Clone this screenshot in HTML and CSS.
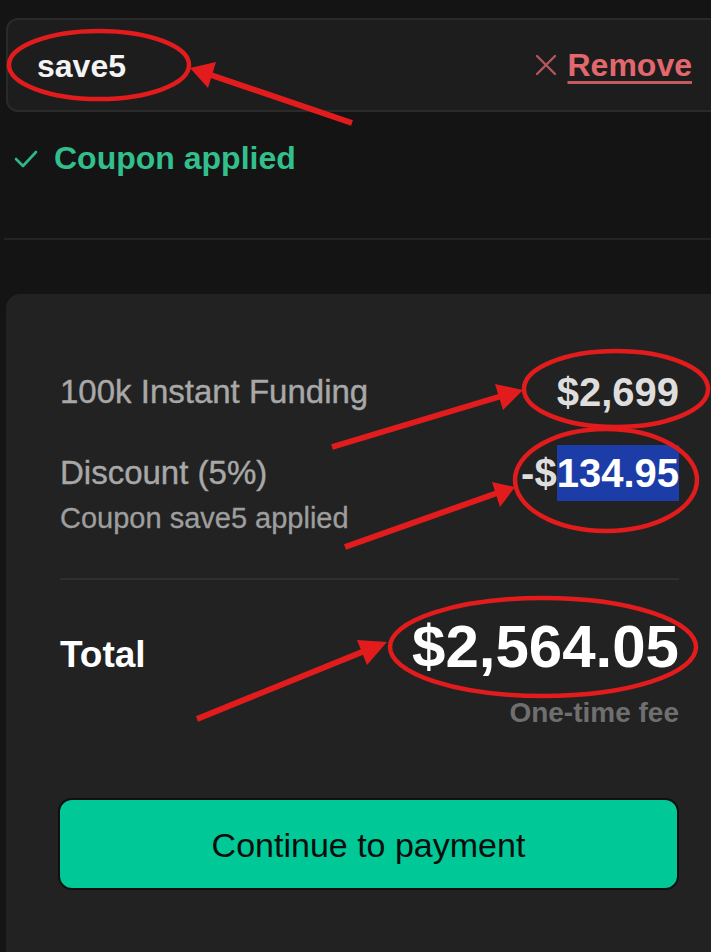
FILE: index.html
```html
<!DOCTYPE html>
<html lang="en">
<head>
<meta charset="utf-8">
<title>Checkout summary</title>
<link rel="stylesheet" href="styles.css">
</head>
<body>
<div class="page">
  <div class="coupon-box">
    <span class="code">save5</span>
    <a class="remove" href="#">
      <svg class="x-icon" width="22" height="22" viewBox="0 0 22 22"><path d="M2 2 L20 20 M20 2 L2 20" stroke="#b4575b" stroke-width="2.4" fill="none" stroke-linecap="round"/></svg>
      <span class="remove-text">Remove</span>
    </a>
  </div>
  <div class="status">
    <svg class="check" width="24" height="20" viewBox="0 0 24 20"><path d="M2 10 L9 17 L22 3" stroke="#2db886" stroke-width="2.6" fill="none" stroke-linecap="round" stroke-linejoin="round"/></svg>
    <span>Coupon applied</span>
  </div>
  <div class="divider"></div>
  <section class="card">
    <div class="row">
      <span class="label">100k Instant Funding</span>
      <span class="amount">$2,699</span>
    </div>
    <div class="row row-discount">
      <div class="label-group">
        <span class="label">Discount (5%)</span>
        <span class="sub">Coupon save5 applied</span>
      </div>
      <span class="amount">-$<span class="selected">134.95</span></span>
    </div>
    <div class="card-divider"></div>
    <div class="total-row">
      <span class="total-label">Total</span>
      <span class="total-amount">$2,564.05</span>
    </div>
    <div class="fee">One-time fee</div>
    <button class="pay">Continue to payment</button>
  </section>
</div>
<svg class="annotations" width="711" height="952" viewBox="0 0 711 952">
  <g fill="none" stroke="#e21c1c" stroke-width="4.5">
    <ellipse cx="99" cy="65" rx="90" ry="34"/>
    <ellipse cx="616" cy="389" rx="92" ry="38"/>
    <ellipse cx="606" cy="480" rx="91" ry="51"/>
    <ellipse cx="543" cy="647" rx="153" ry="49"/>
    <line x1="352" y1="123" x2="202" y2="72" stroke-width="6"/>
    <line x1="332" y1="447" x2="505" y2="395" stroke-width="6"/>
    <line x1="345" y1="547" x2="500" y2="492" stroke-width="6"/>
    <line x1="197" y1="719" x2="372" y2="648" stroke-width="6"/>
  </g>
  <g fill="#e21c1c">
    <polygon points="190,68 216,62 208,88"/>
    <polygon points="523,390 495,384 503,410"/>
    <polygon points="515,487 492,482 500,507"/>
    <polygon points="387,642 357,640 367,665"/>
  </g>
</svg>
</body>
</html>
```
FILE: styles.css
```css
* { box-sizing: border-box; }
html, body {
  margin: 0;
  padding: 0;
  background: #141414;
  overflow: hidden;
  height: 952px;
}
body {
  font-family: "Liberation Sans", Arial, sans-serif;
  position: relative;
  color: #fff;
}
.page {
  padding: 18px 0 0 6px;
}
.coupon-box {
  height: 94px;
  margin-right: -24px;
  background: #1d1d1d;
  border: 2px solid #2a2a2a;
  border-radius: 12px;
  display: flex;
  align-items: center;
  justify-content: space-between;
  padding: 0 41px 0 29px;
}
.code {
  font-size: 32px;
  font-weight: 700;
  color: #f4f4f4;
  line-height: 40px;
  margin-top: 2px;
}
.remove {
  display: flex;
  align-items: center;
  gap: 11px;
  text-decoration: none;
  margin-top: 0;
}
.remove-text {
  font-size: 32px;
  font-weight: 700;
  color: #e2686e;
  text-decoration: underline;
  text-decoration-color: #c45a5f;
  text-decoration-thickness: 3px;
  text-underline-offset: 5px;
  line-height: 40px;
}
.status {
  margin-top: 26px;
  display: flex;
  align-items: center;
  gap: 16px;
  padding-left: 8px;
  height: 40px;
  font-size: 32px;
  font-weight: 700;
  color: #33bf8c;
}
.check { margin-top: 2px; }
.divider {
  margin-top: 60px;
  margin-left: -2px;
  height: 2px;
  background: #232323;
}
.card {
  margin-top: 54px;
  height: 660px;
  background: #222222;
  border-radius: 14px 0 0 0;
  padding: 76px 32px 0 54px;
}
.row {
  display: flex;
  justify-content: space-between;
  align-items: flex-start;
}
.label {
  font-size: 33px;
  line-height: 44px;
  color: #a8a8a8;
  display: block;
  -webkit-text-stroke: 0.4px #a8a8a8;
}
.amount {
  font-size: 40px;
  line-height: 44px;
  font-weight: 700;
  color: #dedede;
}
.row-discount { margin-top: 37px; }
.label-group { display: flex; flex-direction: column; }
.sub {
  margin-top: 6px;
  font-size: 29px;
  line-height: 34px;
  color: #9e9e9e;
  -webkit-text-stroke: 0.3px #9e9e9e;
}
.selected {
  background: #1c3ca8;
  color: #ffffff;
  padding: 6px 0;
}
.card-divider {
  margin-top: 43px;
  height: 2px;
  background: #2f2f2f;
}
.total-row {
  margin-top: 35px;
  display: flex;
  justify-content: space-between;
  align-items: baseline;
}
.total-label {
  font-size: 37px;
  font-weight: 700;
  color: #ffffff;
  line-height: 40px;
}
.total-amount {
  font-size: 60px;
  font-weight: 700;
  color: #ffffff;
  line-height: 64px;
}
.fee {
  margin-top: 18px;
  text-align: right;
  font-size: 28px;
  line-height: 32px;
  font-weight: 700;
  color: #6f6f6f;
}
.pay {
  display: block;
  margin: 69px 0 0 -2px;
  width: calc(100% + 2px);
  height: 92px;
  background: #00c896;
  border: 2px solid #0e0e0e;
  border-radius: 14px;
  font-family: "Liberation Sans", Arial, sans-serif;
  font-size: 34px;
  color: #0d0d0d;
  padding-top: 4px;
  cursor: pointer;
}
.annotations {
  position: absolute;
  top: 0;
  left: 0;
  pointer-events: none;
}
```
